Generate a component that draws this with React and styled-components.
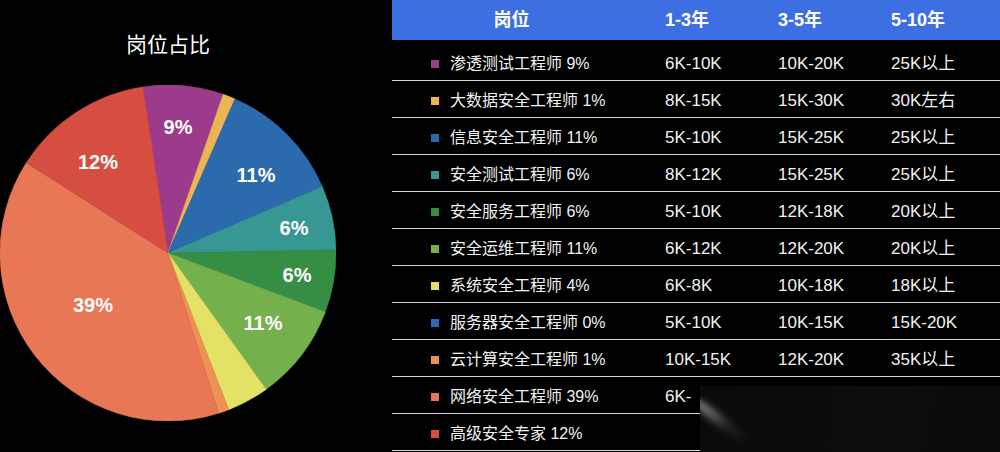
import React from "react";
import styled, { createGlobalStyle } from "styled-components";

const GlobalStyle = createGlobalStyle`
  html, body {
    margin: 0;
    padding: 0;
    background: #000;
  }
  body {
    font-family: "Liberation Sans", "Noto Sans CJK SC", sans-serif;
    color: #fff;
  }
`;

const CX = 168;
const CY = 168;
const R = 168;

// angles measured clockwise from 12 o'clock
const slices = [
  { color: "#9c3b8b", from: -8.6, to: 19.2 },
  { color: "#ecb452", from: 19.2, to: 23.5 },
  { color: "#2b6aac", from: 23.5, to: 66.8 },
  { color: "#379893", from: 66.8, to: 89 },
  { color: "#368e45", from: 89, to: 110.6 },
  { color: "#74b04c", from: 110.6, to: 144.3 },
  { color: "#e3e166", from: 144.3, to: 158.8 },
  { color: "#ee9154", from: 158.8, to: 162.5 },
  { color: "#e77755", from: 162.5, to: 302.5 },
  { color: "#d64d41", from: 302.5, to: 351.4 },
];

// label centres in svg coordinates
const labels = [
  { text: "9%", x: 178, y: 42 },
  { text: "11%", x: 256, y: 90 },
  { text: "6%", x: 294, y: 143 },
  { text: "6%", x: 297, y: 190 },
  { text: "11%", x: 263, y: 238 },
  { text: "39%", x: 93, y: 220 },
  { text: "12%", x: 98, y: 77 },
];

const rows = [
  { name: "渗透测试工程师 9%", color: "#9c3b8b", v: ["6K-10K", "10K-20K", "25K以上"] },
  { name: "大数据安全工程师 1%", color: "#ecb452", v: ["8K-15K", "15K-30K", "30K左右"] },
  { name: "信息安全工程师 11%", color: "#2b6aac", v: ["5K-10K", "15K-25K", "25K以上"] },
  { name: "安全测试工程师 6%", color: "#379893", v: ["8K-12K", "15K-25K", "25K以上"] },
  { name: "安全服务工程师 6%", color: "#368e45", v: ["5K-10K", "12K-18K", "20K以上"] },
  { name: "安全运维工程师 11%", color: "#74b04c", v: ["6K-12K", "12K-20K", "20K以上"] },
  { name: "系统安全工程师 4%", color: "#e3e166", v: ["6K-8K", "10K-18K", "18K以上"] },
  { name: "服务器安全工程师 0%", color: "#2b6aac", v: ["5K-10K", "10K-15K", "15K-20K"] },
  { name: "云计算安全工程师 1%", color: "#ee9154", v: ["10K-15K", "12K-20K", "35K以上"] },
  { name: "网络安全工程师 39%", color: "#e77755", v: ["6K-", "", ""] },
  { name: "高级安全专家 12%", color: "#d64d41", v: ["", "", ""] },
];

function point(deg) {
  const a = (deg * Math.PI) / 180;
  return [CX + R * Math.sin(a), CY - R * Math.cos(a)];
}

function slicePath(from, to) {
  const [x1, y1] = point(from);
  const [x2, y2] = point(to);
  const large = to - from > 180 ? 1 : 0;
  return `M${CX},${CY} L${x1},${y1} A${R},${R} 0 ${large} 1 ${x2},${y2} Z`;
}

export default function App() {
  return (
    <>
      <GlobalStyle />
      <Page>
        <ChartPanel>
          <ChartColumn>
            <Title>岗位占比</Title>
            <PieSvg width="336" height="336" viewBox="0 0 336 336">
              {slices.map((s, i) => (
                <path
                  key={i}
                  d={slicePath(s.from, s.to)}
                  fill={s.color}
                  stroke={s.color}
                  strokeWidth="0.6"
                  strokeLinejoin="round"
                />
              ))}
              {labels.map((l, i) => (
                <PieLabel key={i} x={l.x} y={l.y}>
                  {l.text}
                </PieLabel>
              ))}
            </PieSvg>
          </ChartColumn>
        </ChartPanel>

        <Table>
          <HeaderRow>
            <HeadFirst>岗位</HeadFirst>
            <HeadCell>1-3年</HeadCell>
            <HeadCell>3-5年</HeadCell>
            <HeadCell>5-10年</HeadCell>
          </HeaderRow>
          <Body>
            {rows.map((r, i) => (
              <Row key={i}>
                <NameCell>
                  <Swatch $color={r.color} />
                  {r.name}
                </NameCell>
                {r.v.map((v, j) => (
                  <ValueCell key={j}>{v}</ValueCell>
                ))}
              </Row>
            ))}
          </Body>
          <Smear>
            <Streak />
          </Smear>
        </Table>
      </Page>
    </>
  );
}

const Page = styled.div`
  display: flex;
  width: 1000px;
  height: 452px;
  background: #000;
  overflow: hidden;
`;

const ChartPanel = styled.div`
  width: 392px;
  flex-shrink: 0;
`;

const ChartColumn = styled.div`
  width: 336px;
  display: flex;
  flex-direction: column;
  align-items: center;
`;

const Title = styled.div`
  margin-top: 30px;
  height: 30px;
  line-height: 30px;
  font-size: 21px;
  color: #fff;
`;

const PieSvg = styled.svg`
  display: block;
  margin-top: 25px;
`;

const PieLabel = styled.text`
  fill: #fff;
  font-family: "Liberation Sans", sans-serif;
  font-size: 20px;
  font-weight: 700;
  text-anchor: middle;
  dominant-baseline: central;
`;

const Table = styled.div`
  position: relative;
  flex: 1;
  display: flex;
  flex-direction: column;
`;

const cols = "273px 113px 113px 1fr";

const HeaderRow = styled.div`
  display: grid;
  grid-template-columns: ${cols};
  align-items: center;
  height: 40px;
  background: #3e6fe2;
  font-size: 18px;
  font-weight: 700;
  line-height: 22px;
  color: #fff;
`;

const HeadFirst = styled.div`
  text-align: center;
  padding-right: 34px;
`;

const HeadCell = styled.div``;

const Body = styled.div`
  padding-top: 4px;
`;

const Row = styled.div`
  display: grid;
  grid-template-columns: ${cols};
  align-items: center;
  height: 37px;
  padding-top: 3px;
  box-sizing: border-box;
  border-bottom: 1px solid #d6d6d6;
`;

const NameCell = styled.div`
  display: flex;
  align-items: center;
  gap: 11px;
  padding-left: 39px;
  font-size: 16px;
  line-height: 20px;
  color: #f2f2f2;
  white-space: nowrap;
`;

const Swatch = styled.span`
  width: 8px;
  height: 8px;
  background: ${(p) => p.$color};
  flex-shrink: 0;
`;

const ValueCell = styled.div`
  height: 20px;
  font-size: 17px;
  line-height: 20px;
  color: #f2f2f2;
  white-space: nowrap;
`;

const Smear = styled.div`
  position: absolute;
  left: 308px;
  top: 386px;
  right: 0;
  bottom: 0;
  background: linear-gradient(100deg, #0a0a0a 0%, #0d0d0d 60%, #0b0b0b 100%);
  overflow: hidden;
`;

const Streak = styled.div`
  position: absolute;
  left: -6px;
  top: 8px;
  width: 70px;
  height: 12px;
  border-radius: 50%;
  transform: rotate(38deg);
  transform-origin: 0 50%;
  background: linear-gradient(90deg, rgba(210, 210, 210, 0.7), rgba(120, 120, 120, 0.2) 60%, transparent);
  filter: blur(3px);
`;
